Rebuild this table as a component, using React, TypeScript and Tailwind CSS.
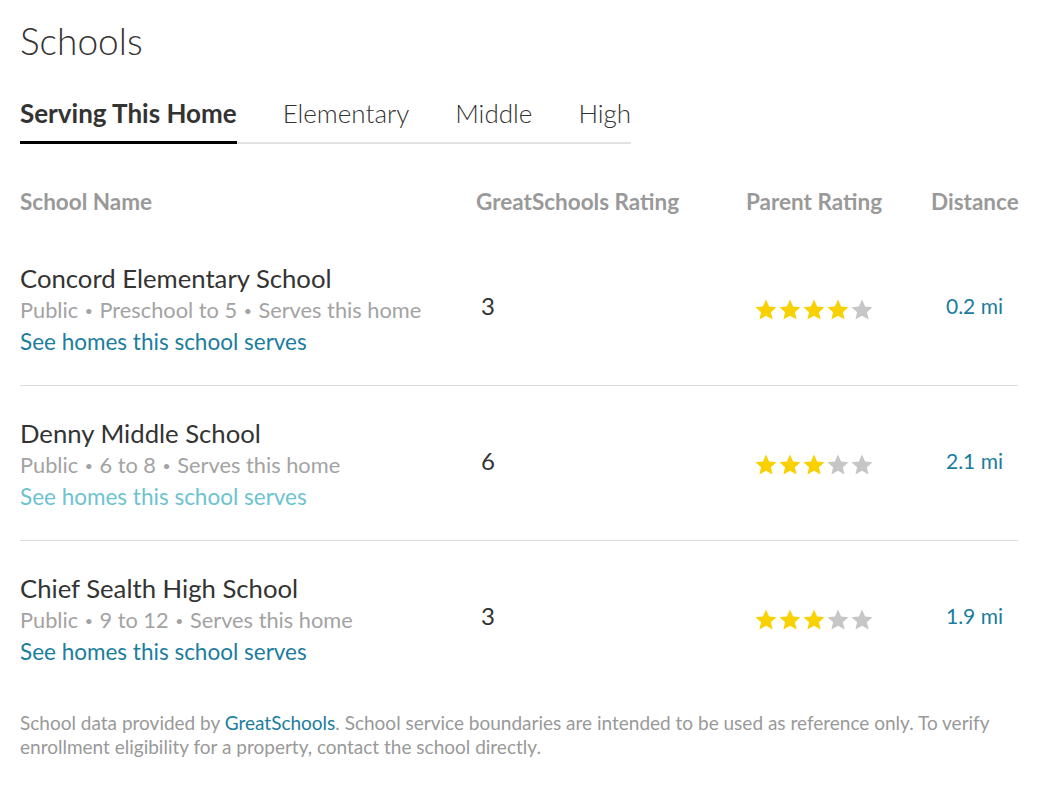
import React from "react";

type School = {
  name: string;
  grades: string;
  rating: number;
  stars: number;
  distance: string;
  linkHover?: boolean;
};

const TABS = ["Serving This Home", "Elementary", "Middle", "High"];

const SCHOOLS: School[] = [
  { name: "Concord Elementary School", grades: "Preschool to 5", rating: 3, stars: 4, distance: "0.2 mi" },
  { name: "Denny Middle School", grades: "6 to 8", rating: 6, stars: 3, distance: "2.1 mi", linkHover: true },
  { name: "Chief Sealth High School", grades: "9 to 12", rating: 3, stars: 3, distance: "1.9 mi" },
];

function Star({ filled }: { filled: boolean }) {
  return (
    <svg width="24" height="24" viewBox="0 0 24 24" className="block">
      <path
        d="M12 1.6l3.1 6.9 7.4.7-5.6 5 1.7 7.4L12 17.8l-6.6 3.8 1.7-7.4-5.6-5 7.4-.7z"
        fill={filled ? "#f9d100" : "#c6c6c6"}
      />
    </svg>
  );
}

function Dot() {
  return <span className="mx-[1px] text-[14px] align-[2px]">•</span>;
}

export default function App() {
  return (
    <div className="min-h-screen bg-white px-[20px] pt-[21px] font-['Lato',sans-serif] text-[#333]">
      <h1 className="text-[37px] font-light leading-[40px] text-[#333]">Schools</h1>

      {/* tabs */}
      <div className="mt-[36px] flex w-fit gap-[46px] border-b-2 border-[#e2e2e2]">
        {TABS.map((t, i) => (
          <div
            key={t}
            className={`-mb-[2px] border-b-[3px] pb-[12px] text-[26px] leading-[32px] ${
              i === 0 ? "border-black font-bold text-[#333]" : "border-transparent font-light text-[#333]"
            }`}
          >
            {t}
          </div>
        ))}
      </div>

      {/* table header */}
      <div className="mt-[44px] grid w-[998px] grid-cols-[456px_269px_186px_87px] pb-[15px] text-[22.5px] font-bold leading-[28px] text-[#999]">
        <div>School Name</div>
        <div>GreatSchools Rating</div>
        <div className="w-[138px] whitespace-nowrap text-center">Parent Rating</div>
        <div className="text-right">Distance</div>
      </div>

      {SCHOOLS.map((s, i) => (
        <div
          key={s.name}
          className={`grid w-[998px] grid-cols-[456px_269px_186px_87px] items-center pt-[32px] ${
            i < SCHOOLS.length - 1 ? "border-b border-[#dcdcdc] pb-[28px]" : ""
          }`}
        >
          <div className="leading-[31px]">
            <div className="text-[25.7px] text-[#333]">{s.name}</div>
            <div className="text-[21.8px] text-[#a3a3a3]">
              Public <Dot /> {s.grades} <Dot /> Serves this home
            </div>
            <div className={`text-[22.5px] ${s.linkHover ? "text-[#6cc3cf]" : "text-[#1a7d9e]"}`}>
              See homes this school serves
            </div>
          </div>
          <div className="-mt-[8px] pl-[5px] text-[24px] text-[#333]">{s.rating}</div>
          <div className="flex w-[138px] justify-center">
            {[0, 1, 2, 3, 4].map((n) => (
              <Star key={n} filled={n < s.stars} />
            ))}
          </div>
          <div className="-mt-[8px] text-center text-[21px] text-[#1a7d9e]">{s.distance}</div>
        </div>
      ))}

      <p className="mt-[44px] w-[990px] text-[19px] leading-[24px] text-[#999]">
        School data provided by <span className="text-[#1a7d9e]">GreatSchools</span>. School service
        boundaries are intended to be used as reference only. To verify enrollment eligibility for a
        property, contact the school directly.
      </p>
    </div>
  );
}
